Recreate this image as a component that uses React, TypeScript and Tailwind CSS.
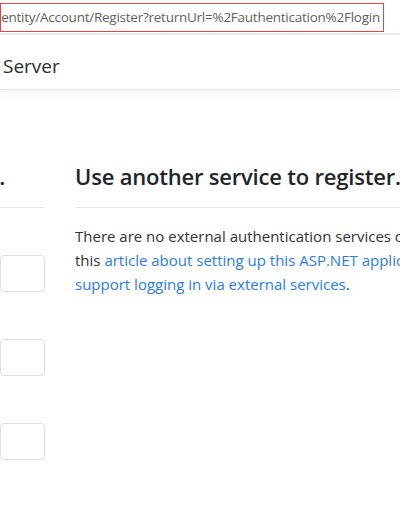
export default function App() {
  return (
    <div
      className="relative h-[516px] w-[400px] overflow-hidden bg-white text-[#212529]"
      style={{ fontFamily: '"Open Sans", "Noto Sans", sans-serif' }}
    >
      {/* address bar strip */}
      <div className="h-[33px] pt-[3px]">
        <div className="flex h-[29px] w-[384px] items-center justify-end overflow-hidden whitespace-nowrap border-[1.5px] border-[#e5434a] pr-[3px] text-[13.5px] tracking-[-0.25px] text-[#5f5f5f]">
          entity/Account/Register?returnUrl=%2Fauthentication%2Flogin
        </div>
      </div>
      <div className="h-[2px] bg-[#ececec]" />

      {/* navbar */}
      <nav className="flex h-[55px] items-center border-b border-[#e5e7e9] pl-[3px] pt-[8px] text-[19px] text-[#2b2b2b] shadow-[0_4px_12px_rgba(0,0,0,0.05)]">
        Server
      </nav>

      {/* page */}
      <main className="flex pt-[72px]">
        <section className="w-[45px] shrink-0">
          <div className="flex justify-end pr-[40px]">
            <h4 className="whitespace-nowrap text-[22px] font-semibold leading-[29px] tracking-[-0.2px]">
              Create a new account.
            </h4>
          </div>
          <hr className="mb-[16px] mt-[16px] border-[#e6e6e6]" />
          <div className="flex flex-col gap-[47px] pt-[31px]">
            <div className="h-[37px] rounded-[4px] border border-[#dcdfe3]" />
            <div className="h-[37px] rounded-[4px] border border-[#dcdfe3]" />
            <div className="h-[37px] rounded-[4px] border border-[#dcdfe3]" />
          </div>
        </section>

        <section className="ml-[30px] w-[540px] shrink-0">
          <h4 className="whitespace-nowrap text-[22px] font-semibold leading-[29px] tracking-[-0.2px]">
            Use another service to register.
          </h4>
          <hr className="mb-[16px] mt-[16px] border-[#e6e6e6]" />
          <p className="whitespace-nowrap text-[15px] leading-[24px] text-[#333]">
            There are no external authentication services configured. See
            <br />
            this{" "}
            <a className="text-[#2b7de0]">
              article about setting up this ASP.NET application to
              <br />
              support logging in via external services
            </a>
            .
          </p>
        </section>
      </main>
    </div>
  );
}
